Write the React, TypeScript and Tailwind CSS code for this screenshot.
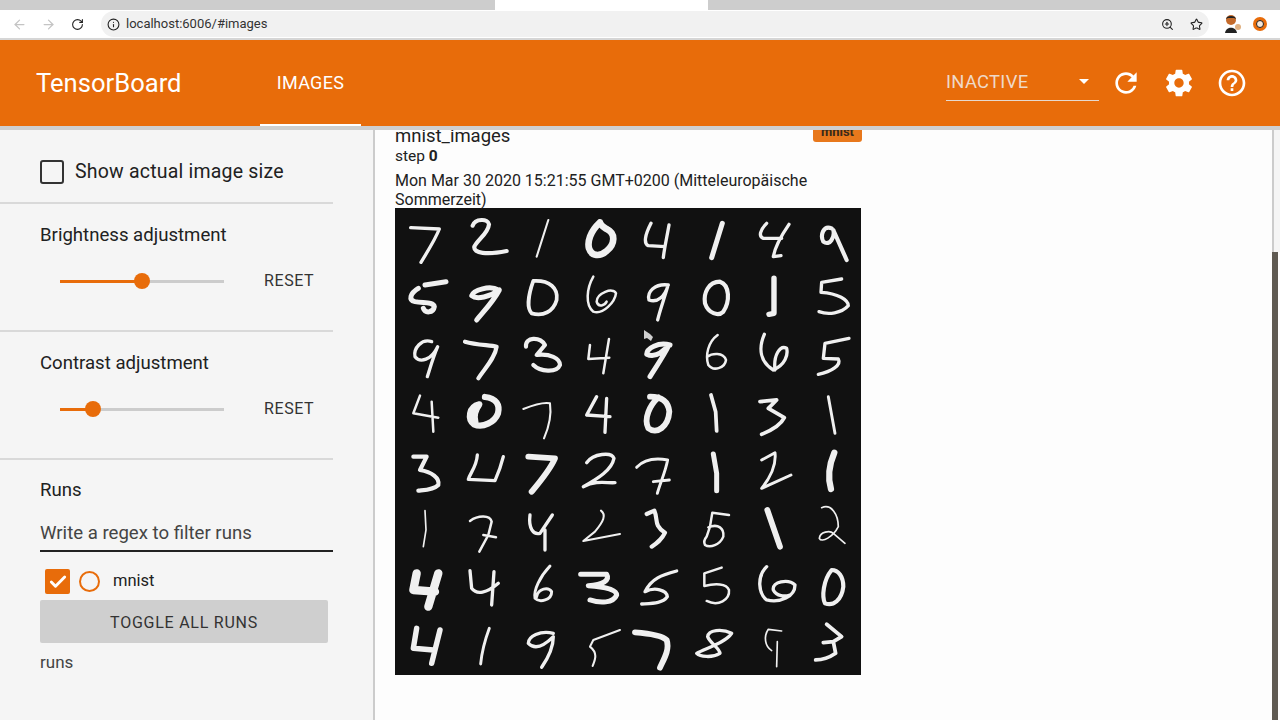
import { ArrowLeft, ArrowRight, RotateCw, Info, ZoomIn, Star, Check } from "lucide-react";

// stroke paths traced off the sample grid, one list per quadrant: [d, width]
type Stroke = [string, number];

const topLeft: Stroke[] = [
  ["M62 68L148 72C135 105 115 135 93 172", 8],
  ["M248 62C255 40 295 40 297 58C295 85 262 105 253 125C250 145 290 150 350 138", 10],
  ["M475 45L440 155", 5],
  ["M630 52C600 80 592 110 597 130C605 155 630 155 650 138C675 118 678 85 650 72C640 66 632 62 630 52Z", 16],
  ["M168 230L105 240", 12],
  ["M85 250C60 265 55 285 75 290C100 295 130 290 133 305C130 325 105 325 100 310", 12],
  ["M325 255C300 240 250 255 245 272C260 285 300 275 328 255C310 290 280 320 260 345", 12],
  ["M430 228C415 270 410 310 425 325C460 335 490 320 500 285C505 250 480 225 430 228Z", 9],
  ["M610 215C590 250 585 300 610 320C640 330 675 290 678 265C670 245 620 265 620 290C625 310 645 300 650 290", 6],
  ["M125 410C95 400 70 430 75 455C90 475 125 465 143 425C130 455 120 490 112 515", 8],
  ["M225 410C260 420 300 420 320 425C315 460 285 490 265 520", 10],
  ["M408 425C405 395 450 395 465 420L440 450C480 445 510 460 510 480C500 505 450 500 430 480", 10],
  ["M600 420L595 462L658 458M657 402L640 505", 6],
  ["M90 572L70 625L145 638M125 590L130 680", 6],
  ["M285 576C320 580 330 600 324 625C314 652 278 670 252 658C232 642 236 606 268 598C258 612 250 630 256 650", 15],
  ["M400 612C430 600 460 590 480 595C485 630 475 670 462 700", 5],
  ["M620 575L590 630L660 635M650 580L645 682", 8],
];

const topRight: Stroke[] = [
  ["M78 55C60 90 55 115 70 122L120 125M132 60C125 100 118 130 115 158", 8],
  ["M292 55L260 158", 12],
  ["M425 55C405 75 400 95 415 100L470 100M492 58C470 90 450 125 445 155L468 152", 8],
  ["M620 70C595 60 585 90 595 110C615 125 630 95 625 75L665 165", 10],
  ["M130 240C90 235 65 260 72 285C100 295 120 270 128 245C118 280 105 315 98 345", 8],
  ["M285 230C250 230 235 265 240 295C250 325 280 335 295 320C315 290 315 240 285 230Z", 10],
  ["M447 220L447 325L432 328", 13],
  ["M650 222L590 232L588 262C640 265 670 285 670 302C650 325 610 330 582 320", 8],
  ["M135 420C100 410 65 430 65 448C90 460 115 440 132 420C115 455 90 490 75 515", 12],
  ["M278 390C250 410 240 450 250 480C265 500 300 490 303 465C295 440 260 445 247 455", 6],
  ["M418 388C400 430 405 470 445 495C480 480 490 450 485 430C465 420 445 450 450 495", 8],
  ["M672 400L600 415L595 460L640 462C650 480 620 500 580 508", 8],
  ["M100 577C75 600 55 640 70 670C95 690 130 665 133 620C130 590 110 575 75 575", 14],
  ["M258 570L272 620L275 678", 9],
  ["M405 590L455 585L430 610L478 638C465 665 430 680 410 688", 9],
  ["M610 575L630 685", 7],
];

const bottomLeft: Stroke[] = [
  ["M70 50L110 50L90 90C125 95 150 115 145 135C130 150 105 150 85 152", 10],
  ["M262 45C260 80 240 100 235 118L315 122C325 100 335 70 340 50", 8],
  ["M415 50L495 55C480 90 450 125 425 155", 14],
  ["M590 68C610 40 665 35 672 55C665 90 625 115 580 140C620 120 650 130 675 128", 8],
  ["M105 212L108 270L100 320", 4],
  ["M240 243C265 225 300 225 305 245L295 285L268 335M280 285L318 292", 6],
  ["M420 225C415 265 430 285 450 280L487 225M465 270L465 330", 8],
  ["M633 212C650 225 640 245 615 275L580 303L690 282", 5],
  ["M80 400L70 450L135 455M145 400L115 500", 20],
  ["M240 392L245 445C260 465 290 460 325 430M312 395L305 495", 8],
  ["M480 378C450 410 430 450 435 475C450 490 485 480 485 455C475 440 445 445 440 470", 7],
  ["M572 403L650 403C660 420 640 435 595 437C650 440 680 450 680 465C670 490 630 490 600 480", 12],
  ["M80 565L70 625L130 630M150 570L125 670", 13],
  ["M298 565C285 600 275 640 272 672", 7],
  ["M490 580C450 570 415 590 415 610C440 635 470 610 490 590C490 625 470 660 455 682", 8],
  ["M690 570L610 600L600 620C625 640 615 660 608 678", 5],
];

const bottomRight: Stroke[] = [
  ["M35 82C60 55 100 55 128 60C120 100 105 130 97 160M85 125L133 120", 7],
  ["M265 42L275 100L275 152", 12],
  ["M410 60L450 38C455 80 430 120 410 145L498 105", 7],
  ["M628 38C610 80 610 120 618 147", 15],
  ["M65 222L88 212C100 240 85 255 120 278C110 300 95 310 80 320", 10],
  ["M312 225L262 218L255 260L245 290M250 262C280 250 298 265 295 290C285 315 255 325 240 315C235 305 238 298 245 290", 6],
  ["M427 210L465 320", 14],
  ["M590 203C620 190 640 225 640 260C625 290 590 310 583 295C585 275 615 270 625 280L660 310", 4],
  ["M155 393C110 405 80 415 60 455C90 440 125 450 127 470C115 490 80 490 50 492", 8],
  ["M290 383L238 400L238 438C270 430 305 430 312 450C315 480 280 500 245 483", 6],
  ["M425 380C395 410 400 460 425 480C465 490 510 470 510 435C490 415 440 425 445 450C455 470 480 470 495 465", 8],
  ["M620 390C595 420 590 470 600 490C625 500 650 480 655 440C655 410 640 390 620 390Z", 10],
  ["M30 577C70 580 110 585 125 600C135 630 115 660 105 683", 14],
  ["M320 580C290 565 250 570 248 590C255 610 285 625 285 640C260 655 225 650 215 640C240 625 300 610 320 580", 8],
  ["M470 573L430 568C415 590 420 620 440 632M457 605L455 680", 4],
  ["M605 553L650 590L625 605L595 608M625 605L632 640C610 655 590 660 572 660", 9],
];

function Quadrant({ strokes, x, y }: { strokes: Stroke[]; x: number; y: number }) {
  return (
    <g transform={`translate(${x} ${y}) scale(0.3333)`} fill="none" stroke="#f0f0f0" strokeLinecap="round" strokeLinejoin="round">
      {strokes.map(([d, w]) => (
        <path key={d} d={d} strokeWidth={w * 1.25} />
      ))}
    </g>
  );
}

function SampleGrid() {
  return (
    <svg width="466" height="467" viewBox="0 0 466 467" className="-mt-[1px] block bg-[#111111]">
      <Quadrant strokes={topLeft} x={-5} y={-3} />
      <Quadrant strokes={topRight} x={230} y={-3} />
      <Quadrant strokes={bottomLeft} x={-5} y={232} />
      <Quadrant strokes={bottomRight} x={230} y={232} />
      {/* mouse pointer sitting on the image */}
      <path d="M249 122L249 131L252 130L256 133L258 129L255 126Z" fill="#cfcfcf" />
    </svg>
  );
}

function AdjustSlider({ label, filled }: { label: string; filled: string }) {
  return (
    <section className="h-[128px] w-[333px] border-b-2 border-[#d9d9d9] pl-10 pt-[19px]">
      <div className="text-[18.6px] leading-[24px] text-[#212121]">{label}</div>
      <div className="mt-[22px] flex items-center">
        <div className="ml-5 flex h-[20px] w-[164px] items-center">
          <div className={`h-[3px] bg-[#e86c0a] ${filled}`} />
          <div className="relative z-10 -mx-2 h-4 w-4 shrink-0 rounded-full bg-[#e86c0a]" />
          <div className="h-[3px] flex-1 bg-[#cccccc]" />
        </div>
        <span className="ml-10 text-[16px] tracking-[0.6px] text-[#333333]">RESET</span>
      </div>
    </section>
  );
}

export default function App() {
  return (
    <div className="flex h-[720px] w-[1280px] flex-col overflow-hidden bg-[#fdfdfd] font-['Roboto',sans-serif]">
      {/* browser chrome */}
      <div className="flex h-[10px] shrink-0 bg-[#cdcdcd]">
        <div className="ml-[495px] w-[213px] bg-white" />
      </div>
      <div className="flex h-[30px] shrink-0 items-center border-b-2 border-[#d6d6d6] bg-white pl-3 pr-3">
        <ArrowLeft size={15} className="text-[#c4c4c4]" />
        <ArrowRight size={15} className="ml-[14px] text-[#c4c4c4]" />
        <RotateCw size={13} className="ml-[15px] text-[#222222]" />
        <div className="ml-[17px] flex h-[26px] flex-1 items-center rounded-full bg-[#f1f1f1] pl-[6px] pr-[6px]">
          <Info size={13} className="text-[#222222]" />
          <span className="ml-[6px] text-[13px] text-[#333333]">localhost:6006/#images</span>
          <ZoomIn size={13} className="ml-auto text-[#222222]" />
          <Star size={13} className="ml-[16px] text-[#222222]" />
        </div>
        <svg width="20" height="20" viewBox="0 0 20 20" className="ml-[13px]">
          <circle cx="9" cy="6" r="5" fill="#c46a2a" />
          <path d="M4 5C4 1 14 1 14 5L12 4H6Z" fill="#222222" />
          <path d="M3 19C4 12 14 12 15 19Z" fill="#222222" />
          <circle cx="16" cy="13" r="3" fill="#e0b080" />
        </svg>
        <svg width="16" height="16" viewBox="0 0 16 16" className="ml-[10px]">
          <circle cx="8" cy="8" r="7" fill="#e86c0a" />
          <circle cx="8" cy="8" r="3.5" fill="#f7e7d8" stroke="#222222" />
        </svg>
      </div>

      {/* app header */}
      <header className="z-10 flex h-[90px] shrink-0 border-b-4 border-[#cfcfcf] bg-[#e86c0a]">
        <div className="flex w-[260px] items-center pl-9 text-[25.6px] text-white">TensorBoard</div>
        <div className="flex h-[86px] w-[101px] items-center justify-center border-b-2 border-white text-[18px] tracking-[0.3px] text-white">
          IMAGES
        </div>
        <div className="ml-auto flex items-center pr-8">
          <div className="flex h-[36px] w-[153px] items-center justify-between border-b border-[#e6d9cf] pr-[10px] pb-[2px] text-[18.4px] tracking-[0.3px] text-[#efd9c8]">
            <span>INACTIVE</span>
            <span className="h-0 w-0 border-x-[5px] border-t-[5px] border-x-transparent border-t-white" />
          </div>
          <svg width="32" height="32" viewBox="0 0 24 24" fill="white" className="ml-[11px]">
            <path d="M17.65 6.35C16.2 4.9 14.21 4 12 4c-4.42 0-7.99 3.58-7.99 8s3.57 8 7.99 8c3.73 0 6.84-2.55 7.73-6h-2.08c-.82 2.33-3.04 4-5.65 4-3.31 0-6-2.69-6-6s2.69-6 6-6c1.66 0 3.14.69 4.22 1.78L13 11h7V4l-2.35 2.35z" />
          </svg>
          <svg width="32" height="32" viewBox="0 0 24 24" fill="white" className="ml-[21px]">
            <path d="M19.43 12.98c.04-.32.07-.64.07-.98s-.03-.66-.07-.98l2.11-1.65c.19-.15.24-.42.12-.64l-2-3.46c-.12-.22-.39-.3-.61-.22l-2.49 1c-.52-.4-1.08-.73-1.69-.98l-.38-2.65C14.46 2.18 14.25 2 14 2h-4c-.25 0-.46.18-.49.42l-.38 2.65c-.61.25-1.17.59-1.69.98l-2.49-1c-.23-.09-.49 0-.61.22l-2 3.46c-.13.22-.07.49.12.64l2.11 1.65c-.04.32-.07.65-.07.98s.03.66.07.98l-2.11 1.65c-.19.15-.24.42-.12.64l2 3.46c.12.22.39.3.61.22l2.49-1c.52.4 1.08.73 1.69.98l.38 2.65c.03.24.24.42.49.42h4c.25 0 .46-.18.49-.42l.38-2.65c.61-.25 1.17-.59 1.69-.98l2.49 1c.23.09.49 0 .61-.22l2-3.46c.12-.22.07-.49-.12-.64l-2.11-1.65zM12 15.5c-1.93 0-3.5-1.57-3.5-3.5s1.57-3.5 3.5-3.5 3.5 1.57 3.5 3.5-1.57 3.5-3.5 3.5z" />
          </svg>
          <svg width="32" height="32" viewBox="0 0 24 24" fill="white" className="ml-[21px]">
            <path d="M11 18h2v-2h-2v2zm1-16C6.48 2 2 6.48 2 12s4.48 10 10 10 10-4.48 10-10S17.52 2 12 2zm0 18c-4.41 0-8-3.59-8-8s3.59-8 8-8 8 3.59 8 8-3.59 8-8 8zm0-14c-2.21 0-4 1.79-4 4h2c0-1.1.9-2 2-2s2 .9 2 2c0 2-3 1.75-3 5h2c0-2.25 3-2.5 3-5 0-2.21-1.79-4-4-4z" />
          </svg>
        </div>
      </header>

      <div className="flex min-h-0 flex-1">
        {/* sidebar */}
        <aside className="w-[375px] shrink-0 border-r-2 border-[#cccccc] bg-[#f5f5f5]">
          <section className="flex h-[74px] w-[333px] items-center border-b-2 border-[#d9d9d9] pl-10 pt-[12px]">
            <div className="h-[24px] w-[24px] rounded-[3px] border-2 border-[#333333]" />
            <span className="ml-[11px] text-[19.5px] tracking-[0.2px] text-[#212121]">Show actual image size</span>
          </section>
          <AdjustSlider label="Brightness adjustment" filled="w-[82px]" />
          <AdjustSlider label="Contrast adjustment" filled="w-[33px]" />
          <section className="w-[333px] pl-10 pt-[18px]">
            <div className="text-[18.6px] leading-[24px] text-[#212121]">Runs</div>
            <div className="mt-[15px] h-[35px] border-b-2 border-[#222222] text-[18.6px] leading-[32px] text-[#444444]">
              Write a regex to filter runs
            </div>
            <div className="mt-[17px] flex items-center pl-[5px]">
              <div className="flex h-[25px] w-[25px] items-center justify-center rounded-[2px] bg-[#e86c0a]">
                <Check size={20} strokeWidth={3.5} className="text-white" />
              </div>
              <div className="ml-[9px] h-[21px] w-[21px] rounded-full border-2 border-[#e86c0a]" />
              <span className="ml-[13px] text-[16.5px] text-[#212121]">mnist</span>
            </div>
            <div className="mt-[6px] flex h-[43px] w-[288px] items-center justify-center rounded-[2px] bg-[#cfcfcf] pt-[2px] text-[16px] tracking-[0.75px] text-[#333333]">
              TOGGLE ALL RUNS
            </div>
            <div className="mt-[7px] text-[17px] text-[#444444]">runs</div>
          </section>
        </aside>

        {/* image card */}
        <main className="flex-1 pl-5">
          <div className="w-[467px]">
            <div className="-mt-[6px] flex items-start justify-between">
              <span className="text-[18.5px] leading-[24px] text-[#212121]">mnist_images</span>
              <span className="-mt-[3px] flex h-[21px] w-[49px] items-end justify-center rounded-[3px] bg-[#e8781c] pb-[3px] text-[13px] font-bold leading-[15px] text-[#3a2a1a]">
                mnist
              </span>
            </div>
            <div className="-mt-[1px] text-[15.5px] leading-[19px] text-[#212121]">
              step <span className="font-bold">0</span>
            </div>
            <div className="mt-[5px] w-[440px] text-[16px] leading-[19px] text-[#212121]">
              Mon Mar 30 2020 15:21:55 GMT+0200 (Mitteleuropäische Sommerzeit)
            </div>
            <SampleGrid />
          </div>
        </main>

        {/* scrollbar */}
        <div className="flex w-[8px] shrink-0 flex-col">
          <div className="h-[122px] border-l-2 border-[#cccccc] bg-[#f5f5f5]" />
          <div className="w-[6px] flex-1 bg-[#5f5a52]" />
        </div>
      </div>
    </div>
  );
}
